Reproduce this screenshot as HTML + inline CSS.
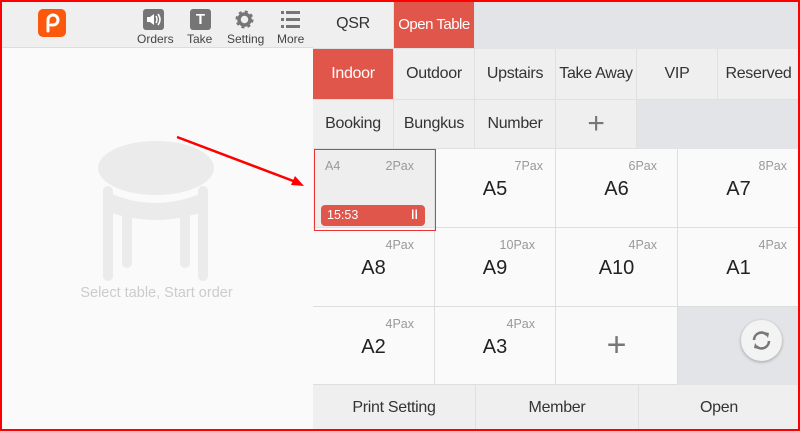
<!DOCTYPE html>
<html><head><style>
*{box-sizing:border-box;margin:0;padding:0}
body{width:800px;height:431px;overflow:hidden;background:#fafafa;font-family:"Liberation Sans",sans-serif;position:relative}
.a{position:absolute}
.c{position:absolute;display:flex;align-items:center;justify-content:center;font-size:16px;color:#333;background:#efefef;border-right:1px solid #e0e0e0;border-bottom:1px solid #e0e0e0;white-space:nowrap;letter-spacing:-0.3px}
.t{position:absolute;background:#fafafa;border-right:1px solid #dedede;border-bottom:1px solid #dedede}
.t .p{position:absolute;right:12px;top:10px;font-size:12.5px;color:#999}
.t .n{position:absolute;left:0;right:0;top:29px;text-align:center;font-size:20px;color:#222}
.ic{position:absolute;top:9px;width:21px;height:21px;background:#757575;border-radius:3px;color:#fff;font-weight:bold;font-size:15px;text-align:center;line-height:21px}
.lb{position:absolute;top:32px;font-size:12px;color:#444}
</style></head><body>
<div class="a" style="left:0;top:0;width:313px;height:48px;background:#efefef;border-bottom:1px solid #ddd"></div>
<div class="a" style="left:38px;top:9px;width:28px;height:28px;background:#fb5a0e;border-radius:5px"></div>
<svg class="a" style="left:38px;top:9px" width="28" height="28"><path d="M10 22V11a5 5 0 1 1 5 5h-2" stroke="#fff" stroke-width="3" fill="none" stroke-linecap="round"/></svg>
<div class="ic" style="left:143px"><svg width="21" height="21"><path d="M4 8h3l4-3v11l-4-3H4z" fill="#fff"/><path d="M13 7q2 3.5 0 7M15 5q4 5.5 0 11" stroke="#fff" stroke-width="1.5" fill="none"/></svg></div>
<div class="lb" style="left:137px">Orders</div>
<div class="ic" style="left:190px">T</div>
<div class="lb" style="left:187px">Take</div>
<svg class="a" style="left:234px;top:9px" width="21" height="21"><circle cx="10.5" cy="10.5" r="7" fill="none" stroke="#757575" stroke-width="4" stroke-dasharray="2.7 2.8"/><circle cx="10.5" cy="10.5" r="5.5" fill="none" stroke="#757575" stroke-width="3.5"/></svg>
<div class="lb" style="left:227px">Setting</div>
<svg class="a" style="left:280px;top:9px" width="21" height="21"><g fill="#757575"><rect x="1" y="2" width="3" height="3"/><rect x="6" y="2" width="14" height="3"/><rect x="1" y="9" width="3" height="3"/><rect x="6" y="9" width="14" height="3"/><rect x="1" y="16" width="3" height="3"/><rect x="6" y="16" width="14" height="3"/></g></svg>
<div class="lb" style="left:277px">More</div>
<svg class="a" style="left:97px;top:138px" width="120" height="150"><g fill="#ebebeb"><ellipse cx="59" cy="30" rx="58" ry="27"/><path d="M6 52Q59 78 111 52V72Q59 92 6 72Z"/><rect x="6" y="48" width="10" height="95" rx="5"/><rect x="101" y="48" width="10" height="95" rx="5"/><rect x="25" y="68" width="10" height="62" rx="5"/><rect x="83" y="68" width="10" height="62" rx="5"/></g></svg>
<div class="a" style="left:0;width:313px;top:285px;text-align:center;font-size:14.5px;color:#ccc">Select table, Start order</div>
<div class="a" style="left:313px;top:0;width:487px;height:149px;background:#e3e4e8"></div>
<div class="c" style="left:313px;top:0;width:81px;height:49px">QSR</div>
<div class="c" style="left:394px;top:0;width:81px;height:49px;background:#e0564b;color:#fff;font-size:15px;letter-spacing:-0.5px">Open Table</div>
<div class="c" style="left:313px;top:49px;width:81px;height:51px;background:#e0564b;color:#fff">Indoor</div>
<div class="c" style="left:394px;top:49px;width:81px;height:51px">Outdoor</div>
<div class="c" style="left:475px;top:49px;width:81px;height:51px">Upstairs</div>
<div class="c" style="left:556px;top:49px;width:81px;height:51px">Take Away</div>
<div class="c" style="left:637px;top:49px;width:81px;height:51px">VIP</div>
<div class="c" style="left:718px;top:49px;width:82px;height:51px">Reserved</div>
<div class="c" style="left:313px;top:100px;width:81px;height:49px">Booking</div>
<div class="c" style="left:394px;top:100px;width:81px;height:49px">Bungkus</div>
<div class="c" style="left:475px;top:100px;width:81px;height:49px">Number</div>
<div class="c" style="left:556px;top:100px;width:81px;height:49px;font-size:30px;color:#777">+</div>
<div class="t" style="left:313px;top:149px;width:122px;height:79px;background:#eee"><span style="position:absolute;left:12px;top:10px;font-size:12.5px;color:#999">A4</span><span class="p" style="right:20px">2Pax</span><div class="a" style="left:8px;top:56px;width:104px;height:21px;background:#e0564b;border-radius:4px;color:#fff;font-size:12.5px;line-height:21px;padding-left:6px">15:53<span style="position:absolute;right:7px;font-weight:bold">ǀǀ</span></div></div>
<div class="t" style="left:435px;top:149px;width:121px;height:79px"><span class="p">7Pax</span><div class="n">A5</div></div>
<div class="t" style="left:556px;top:149px;width:122px;height:79px"><span class="p" style="right:20px">6Pax</span><div class="n">A6</div></div>
<div class="t" style="left:678px;top:149px;width:122px;height:79px"><span class="p">8Pax</span><div class="n">A7</div></div>
<div class="t" style="left:313px;top:228px;width:122px;height:79px"><span class="p" style="right:20px">4Pax</span><div class="n">A8</div></div>
<div class="t" style="left:435px;top:228px;width:121px;height:79px"><span class="p" style="right:20px">10Pax</span><div class="n">A9</div></div>
<div class="t" style="left:556px;top:228px;width:122px;height:79px"><span class="p" style="right:20px">4Pax</span><div class="n">A10</div></div>
<div class="t" style="left:678px;top:228px;width:122px;height:79px"><span class="p">4Pax</span><div class="n">A1</div></div>
<div class="t" style="left:313px;top:307px;width:122px;height:78px"><span class="p" style="right:20px">4Pax</span><div class="n">A2</div></div>
<div class="t" style="left:435px;top:307px;width:121px;height:78px"><span class="p" style="right:20px">4Pax</span><div class="n">A3</div></div>
<div class="t" style="left:556px;top:307px;width:122px;height:78px;display:flex;align-items:center;justify-content:center;font-size:34px;color:#777">+</div>
<div class="a" style="left:678px;top:307px;width:122px;height:78px;background:#e3e4e8"></div>
<div class="a" style="left:741px;top:320px;width:41px;height:41px;border-radius:50%;background:#f3f3f3;box-shadow:0 1px 3px rgba(0,0,0,.3)"></div>
<svg class="a" style="left:750px;top:329px" width="23" height="23"><path d="M4 11a7.5 7.5 0 0 1 13-5M19 12a7.5 7.5 0 0 1-13 5" stroke="#777" stroke-width="2.6" fill="none"/><path d="M14 3l5 1-1 5z" fill="#777"/><path d="M9 20l-5-1 1-5z" fill="#777"/></svg>
<div class="c" style="left:313px;top:385px;width:163px;height:46px">Print Setting</div>
<div class="c" style="left:476px;top:385px;width:163px;height:46px">Member</div>
<div class="c" style="left:639px;top:385px;width:161px;height:46px">Open</div>
<div class="a" style="left:314px;top:149px;width:122px;height:82px;border:1.5px solid #e33;z-index:5"></div>
<svg class="a" style="left:0;top:0;z-index:6" width="800" height="431"><line x1="177" y1="137" x2="296" y2="182" stroke="#f00" stroke-width="2.5"/><path d="M304 186l-13-1 4-9z" fill="#f00"/></svg>
<div class="a" style="left:0;top:0;width:800px;height:431px;border:2px solid #f00;z-index:7"></div>
</body></html>
